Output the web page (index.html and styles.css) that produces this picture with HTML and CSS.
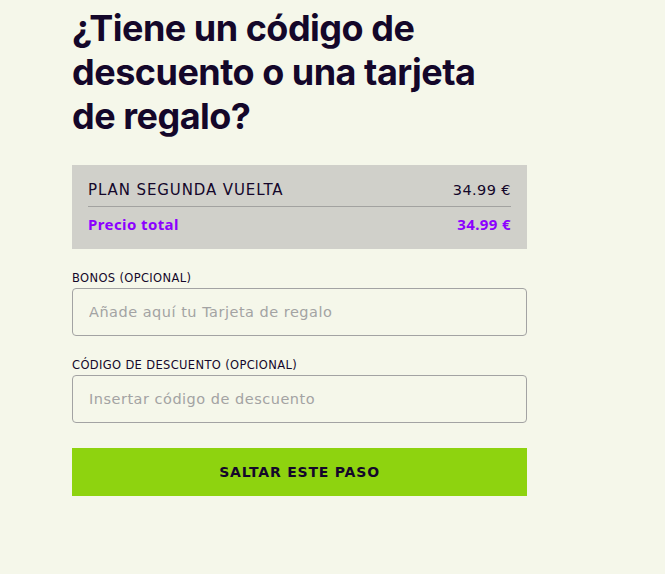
FILE: index.html
```html
<!DOCTYPE html>
<html lang="es">
<head>
<meta charset="utf-8">
<link rel="stylesheet" href="styles.css">
</head>
<body>
<main class="page">
  <h1 class="title">¿Tiene un código de descuento o una tarjeta de regalo?</h1>
  <section class="summary">
    <div class="row">
      <span class="plan">PLAN SEGUNDA VUELTA</span>
      <span>34.99 €</span>
    </div>
    <div class="row total">
      <span>Precio total</span>
      <span>34.99 €</span>
    </div>
  </section>
  <div class="field">
    <label class="label">BONOS (OPCIONAL)</label>
    <input class="input" type="text" placeholder="Añade aquí tu Tarjeta de regalo">
  </div>
  <div class="field">
    <label class="label">CÓDIGO DE DESCUENTO (OPCIONAL)</label>
    <input class="input" type="text" placeholder="Insertar código de descuento">
  </div>
  <button class="skip">SALTAR ESTE PASO</button>
</main>
</body>
</html>
```
FILE: styles.css
```css
html, body {
  margin: 0;
  padding: 0;
  background: #f5f7ea;
}
body {
  font-family: "DejaVu Sans", sans-serif;
  color: #14072a;
}
.page {
  width: 455px;
  margin-left: 72px;
  padding-top: 6px;
  display: flex;
  flex-direction: column;
}
.title {
  font-family: "Inter", sans-serif;
  font-weight: 700;
  font-size: 36px;
  line-height: 44px;
  letter-spacing: -0.5px;
  margin: 0 0 27px 0;
  width: 440px;
  color: #14072a;
}
.summary {
  background: #d0d0ca;
  padding: 9px 16px 9px 16px;
  display: flex;
  flex-direction: column;
}
.row {
  display: flex;
  justify-content: space-between;
  align-items: center;
  font-size: 14.5px;
  letter-spacing: 0.4px;
  height: 33px;
}
.row:first-child {
  border-bottom: 1px solid #a2a2a0;
  height: 32px;
}
.plan {
  font-size: 15px;
  letter-spacing: 0.9px;
}
.row.total {
  font-family: "Noto Sans", sans-serif;
  color: #8c00ff;
  font-weight: 700;
  font-size: 15px;
  letter-spacing: 0.4px;
  height: 33px;
}
.field {
  display: flex;
  flex-direction: column;
  margin-top: 23px;
}
.label {
  font-size: 11.5px;
  line-height: 13px;
  letter-spacing: 0.35px;
  margin-bottom: 3px;
}
.input {
  height: 48px;
  box-sizing: border-box;
  border: 1px solid #a3a3a3;
  border-radius: 4px;
  background: transparent;
  padding: 0 16px;
  font-family: inherit;
  font-size: 14.5px;
  letter-spacing: 0.5px;
  color: #14072a;
}
.input::placeholder {
  color: #a3a3a3;
}
.skip {
  margin-top: 25px;
  height: 48px;
  border: none;
  background: #8ed30f;
  font-family: inherit;
  font-weight: 700;
  font-size: 14px;
  letter-spacing: 0.8px;
  color: #14072a;
}
```
